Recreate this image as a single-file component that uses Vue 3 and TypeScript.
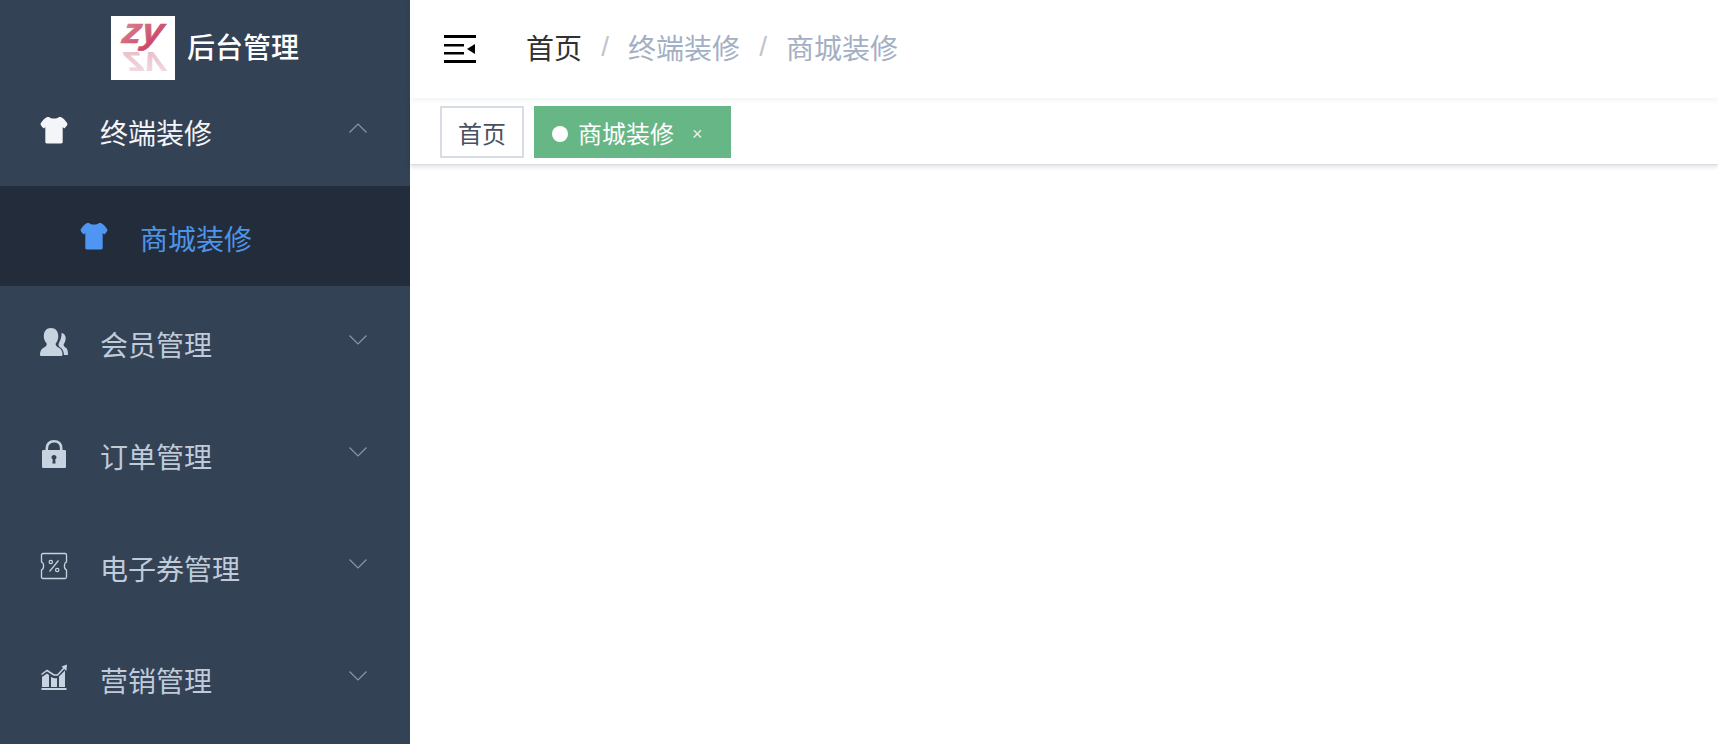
<script setup lang="ts">
interface MenuItem { key: string; label: string }
const menus: MenuItem[] = [
  { key: 'users', label: '会员管理' },
  { key: 'lock', label: '订单管理' },
  { key: 'coupon', label: '电子券管理' },
  { key: 'chart', label: '营销管理' },
]
const teePath = 'M9 1 C10.5 3.2 17.5 3.2 19 1 L21 1 C23.5 2 26 4.5 28 8 C28 9.5 26 12 24.5 13 L23 11.5 L23 27 C23 28 22.3 28.5 21.5 28.5 L6.5 28.5 C5.7 28.5 5 28 5 27 L5 11.5 L3.5 13 C2 12 0 9.5 0 8 C2 4.5 4.5 2 7 1 Z'
</script>

<template>
  <div class="layout">
    <aside class="sidebar">
      <div class="brand">
        <svg class="logo" viewBox="0 0 64 64">
          <defs>
            <linearGradient id="zyGrad" x1="0" y1="0" x2="1" y2="1">
              <stop offset="0" stop-color="#dd9296" />
              <stop offset="0.6" stop-color="#d05a76" />
              <stop offset="1" stop-color="#c62f58" />
            </linearGradient>
            <linearGradient id="zyFade" x1="0" y1="1" x2="0" y2="0">
              <stop offset="0" stop-color="#e6b6c2" />
              <stop offset="1" stop-color="#f8e9ec" />
            </linearGradient>
            <clipPath id="reflectClip"><rect x="0" y="-58" width="64" height="22" /></clipPath>
          </defs>
          <rect width="64" height="64" fill="#fff" />
          <g clip-path="url(#reflectClip)" transform="scale(1,-1)">
            <text transform="translate(12 -36) skewX(-8)" class="zy" fill="url(#zyFade)" textLength="40" lengthAdjust="spacingAndGlyphs">zy</text>
          </g>
          <text transform="translate(10 27) skewX(-8)" class="zy" fill="url(#zyGrad)" stroke="url(#zyGrad)" stroke-width="0.7" textLength="41" lengthAdjust="spacingAndGlyphs">zy</text>
        </svg>
        <span class="brand-name">后台管理</span>
      </div>

      <div class="row open">
        <svg class="ic" viewBox="0 0 28 29"><path :d="teePath" fill="#f4f5f8" /></svg>
        <span class="label">终端装修</span>
        <svg class="chev" viewBox="0 0 18 10"><path d="M0.5 9.5 L9 1 L17.5 9.5" /></svg>
      </div>
      <div class="row sub">
        <svg class="ic" viewBox="0 0 28 29"><path :d="teePath" fill="#4f96f2" /></svg>
        <span class="label">商城装修</span>
      </div>

      <div v-for="m in menus" :key="m.key" class="row">
        <svg v-if="m.key === 'users'" class="ic" viewBox="0 0 28 28" fill="#c8d3e0">
          <path d="M21.5 5 C24.5 5.5 26 8 25.6 11.5 C25.4 13.4 24.6 15 23.6 16.2 C23.5 18 24.8 19 26 19.8 C27.4 20.8 28 23 28 27 L24 27 C23.7 23 22.5 20.8 20 19.2 C18.5 18.2 18.2 16.8 18.8 15.2 C20.6 12 21.8 8.5 21.5 5 Z" />
          <path d="M11 0 C15.6 0 18.3 3.3 18.3 8.2 C18.3 11.2 17.2 13.6 15.7 15.5 C15.4 17.5 16.5 18.4 18.5 19.4 C21.5 20.8 22.5 23.5 22.5 26.5 C22.5 27.5 22 28 21 28 L1.5 28 C0.5 28 0 27.5 0 26.5 C0 23.5 1 20.8 4 19.4 C6 18.4 7 17.5 6.7 15.5 C5 13.6 3.8 11.2 3.8 8.2 C3.8 3.3 6.4 0 11 0 Z" />
        </svg>
        <svg v-else-if="m.key === 'lock'" class="ic" viewBox="0 0 28 28">
          <path d="M6.8 12 L6.8 8.5 C6.8 4 9.5 1.3 14 1.3 C18.5 1.3 21.2 4 21.2 8.5 L21.2 12" fill="none" stroke="#c8d3e0" stroke-width="2.6" />
          <path fill="#c8d3e0" fill-rule="evenodd" d="M3.5 10 L24.5 10 C25.5 10 26 10.5 26 11.5 L26 26.5 C26 27.5 25.5 28 24.5 28 L3.5 28 C2.5 28 2 27.5 2 26.5 L2 11.5 C2 10.5 2.5 10 3.5 10 Z M14 15 C12.5 15 11.5 16 11.5 17.3 C11.5 18.3 12 19 12.8 19.4 L12.4 23.5 L15.6 23.5 L15.2 19.4 C16 19 16.5 18.3 16.5 17.3 C16.5 16 15.5 15 14 15 Z" />
        </svg>
        <svg v-else-if="m.key === 'coupon'" class="ic" viewBox="0 0 28 28" fill="none" stroke="#c8d3e0">
          <path stroke-width="1.3" d="M3 1.5 L25 1.5 C26 1.5 26.5 2 26.5 3 L26.5 10 C25 10.5 24.4 12 24.4 14 C24.4 16 25 17.5 26.5 18 L26.5 25 C26.5 26 26 26.5 25 26.5 L3 26.5 C2 26.5 1.5 26 1.5 25 L1.5 18 C3 17.5 3.6 16 3.6 14 C3.6 12 3 10.5 1.5 10 L1.5 3 C1.5 2 2 1.5 3 1.5 Z" />
          <path stroke-width="1.2" d="M18.5 8.5 L9.5 19.5" />
          <circle cx="10.8" cy="10" r="1.7" stroke-width="1.2" />
          <circle cx="17.2" cy="18" r="1.7" stroke-width="1.2" />
        </svg>
        <svg v-else class="ic" viewBox="0 0 28 28" fill="#c8d3e0">
          <path d="M2 13 L7 9.5 L9 11 L9 23 L2 23 Z M11 13 L14 14.2 L17 14.2 L17 23 L11 23 Z M19 12.5 L25 6.5 L25 23 L19 23 Z" />
          <path fill="none" stroke="#c8d3e0" stroke-width="1.5" d="M1.5 10.5 L7 6.5 L14 11 L17.5 11 L24.5 3.5" />
          <path d="M27 0.5 L26.4 7 L21.5 2.6 Z" />
          <rect x="1.5" y="24" width="25" height="2" />
        </svg>
        <span class="label">{{ m.label }}</span>
        <svg class="chev" viewBox="0 0 18 10"><path d="M0.5 0.5 L9 9 L17.5 0.5" /></svg>
      </div>
    </aside>

    <main class="main">
      <header class="navbar">
        <svg class="fold" viewBox="0 0 32 28">
          <rect x="0" y="0" width="32" height="3" />
          <rect x="0" y="9" width="20" height="2.5" />
          <rect x="0" y="17" width="20" height="2.5" />
          <rect x="0" y="25" width="32" height="3" />
          <path d="M23 14 L31 9 L31 19 Z" />
        </svg>
        <nav class="crumbs">
          <span class="crumb-home">首页</span>
          <span class="sep">/</span>
          <span class="crumb">终端装修</span>
          <span class="sep">/</span>
          <span class="crumb">商城装修</span>
        </nav>
      </header>
      <div class="tags">
        <span class="tag">首页</span>
        <span class="tag active">
          <i class="dot"></i>
          <span>商城装修</span>
          <span class="close">×</span>
        </span>
      </div>
    </main>
  </div>
</template>

<style>
html, body { margin: 0; background: #fff; }
</style>

<style scoped>
.layout {
  display: flex;
  height: 744px;
  overflow: hidden;
  font-family: "Noto Sans CJK SC", "Noto Sans", sans-serif;
}
.sidebar {
  flex: none;
  width: 410px;
  background: #344256;
  box-sizing: border-box;
}
.brand {
  height: 74px;
  display: flex;
  align-items: flex-start;
  padding: 16px 0 0 111px;
  box-sizing: border-box;
  gap: 12px;
}
.logo { width: 64px; height: 64px; flex: none; overflow: visible; }
.zy {
  font-family: "Liberation Sans", sans-serif;
  font-weight: 700;
  font-style: italic;
  font-size: 36px;
}
.brand-name {
  color: #fff;
  font-size: 28px;
  font-weight: 500;
  line-height: 64px;
  margin-top: -2px;
}
.row {
  display: flex;
  align-items: center;
  height: 112px;
  padding: 0 43px 0 40px;
  color: #bfcbd9;
  font-size: 28px;
}
.row.open { color: #f4f5f8; }
.row.sub {
  height: 100px;
  padding-left: 80px;
  background: #222c3b;
  color: #4e94e8;
}
.ic { width: 28px; height: 28px; flex: none; margin-right: 32px; }
.label { flex: 1; line-height: 40px; padding-top: 3px; }
.chev { width: 18px; height: 10px; flex: none; margin-top: -5px; fill: none; stroke: #8a97a8; stroke-width: 1.2; }
.main { flex: 1; display: flex; flex-direction: column; min-width: 0; }
.navbar {
  height: 98px;
  flex: none;
  display: flex;
  align-items: center;
  padding-left: 34px;
  box-sizing: border-box;
  background: #fff;
  box-shadow: 0 1px 6px rgba(0, 21, 41, 0.08);
  position: relative;
  z-index: 1;
}
.fold { width: 32px; height: 28px; flex: none; margin-right: 50px; fill: #000; }
.crumbs {
  display: flex;
  align-items: center;
  font-size: 28px;
  line-height: 40px;
  margin-top: -5px;
}
.crumb-home { color: #303133; }
.crumb { color: #a3afc4; }
.sep {
  color: #c0c4cc;
  font-family: "Liberation Sans", sans-serif;
  font-weight: 400;
  width: 46px;
  text-align: center;
  padding-top: 0;
}
.tags {
  height: 67px;
  flex: none;
  box-sizing: border-box;
  padding: 8px 0 7px 30px;
  display: flex;
  gap: 10px;
  background: #fff;
  border-bottom: 1px solid #d8dce5;
  box-shadow: 0 2px 5px rgba(0, 0, 0, 0.12);
}
.tag {
  box-sizing: border-box;
  height: 52px;
  display: flex;
  align-items: center;
  padding: 0 16px;
  border: 2px solid #d8dce5;
  color: #495060;
  font-size: 24px;
  background: #fff;
}
.tag.active {
  background: #67b686;
  border-color: #67b686;
  color: #fff;
  padding: 0 26px 0 16px;
}
.dot {
  width: 16px;
  height: 16px;
  border-radius: 50%;
  background: #fff;
  margin: 4px 10px 0 0;
  flex: none;
}
.close {
  font-size: 18px;
  margin: 5px 0 0 18px;
  font-family: "Liberation Sans", sans-serif;
  color: rgba(255, 255, 255, 0.85);
}
</style>
